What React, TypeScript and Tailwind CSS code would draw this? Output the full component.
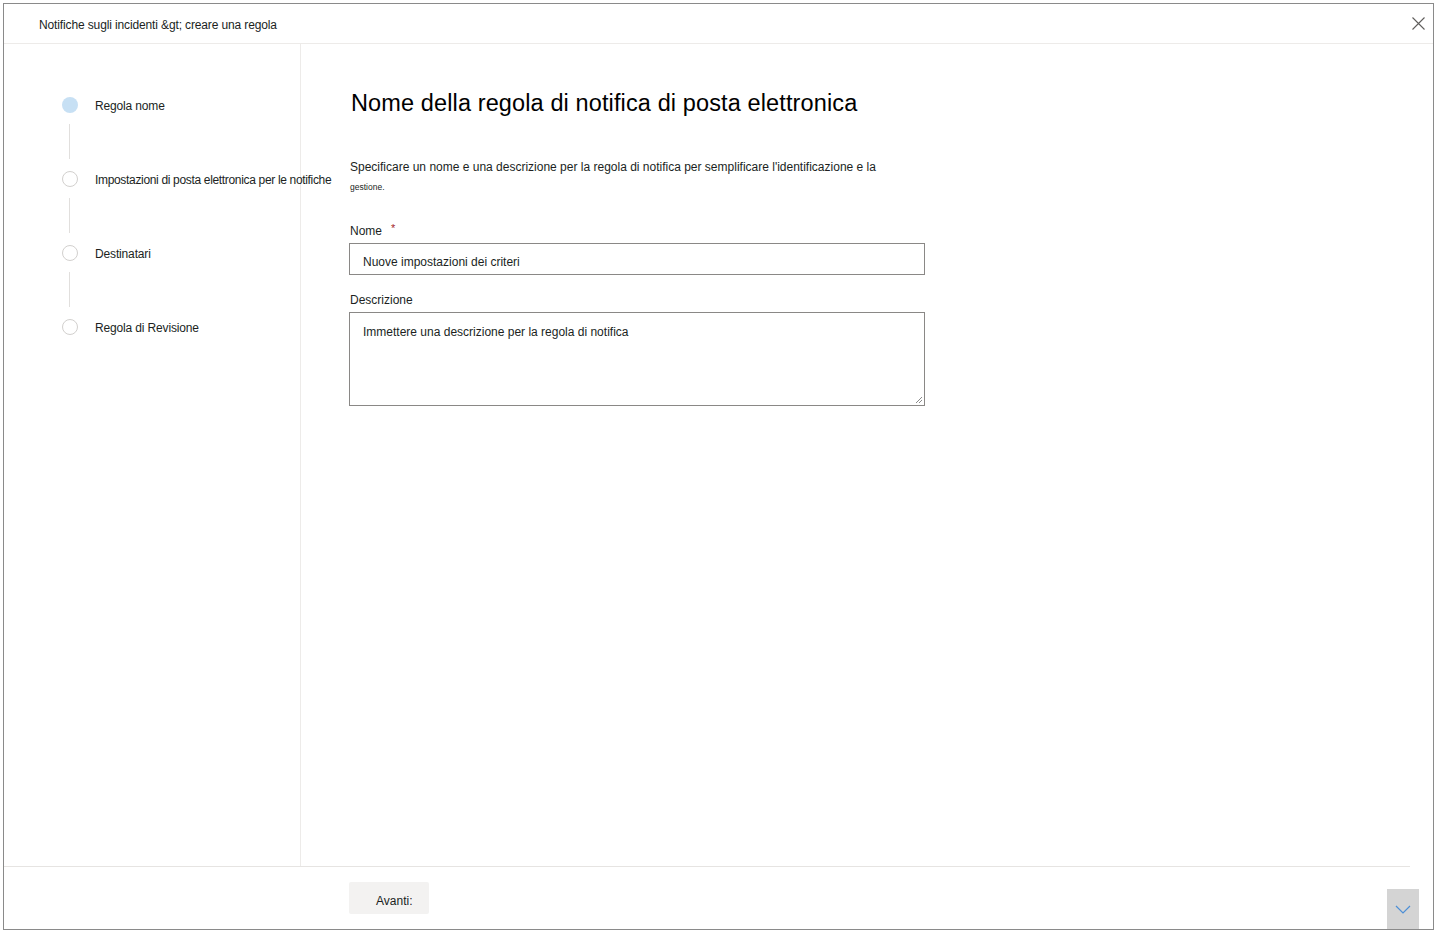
import React from "react";

const font = { fontFamily: '"Liberation Sans", Arial, sans-serif' };

function Step({ label, active, last, tight }: { label: string; active?: boolean; last?: boolean; tight?: boolean }) {
  return (
    <div className="flex flex-col">
      <div className="flex items-center h-[16px]">
        <div
          className={
            active
              ? "w-[16px] h-[16px] shrink-0 rounded-full bg-[#c7e0f4]"
              : "w-[16px] h-[16px] shrink-0 rounded-full border border-[#d2d0ce] bg-white"
          }
        />
        <span
          className={
            tight
              ? "ml-[17px] text-[12px] text-[#201f1e] tracking-[-0.33px] whitespace-nowrap pt-[1px]"
              : "ml-[17px] text-[12px] text-[#201f1e] tracking-[-0.15px] whitespace-nowrap pt-[2px]"
          }
        >
          {label}
        </span>
      </div>
      {!last && (
        <div className="flex pl-[7px] pt-[11px] pb-[12px]">
          <div className="w-[1px] h-[35px] bg-[#e1dfdd]" />
        </div>
      )}
    </div>
  );
}

export default function App() {
  return (
    <div className="w-[1443px] h-[933px] bg-white pt-[3px] pl-[3px]" style={font}>
      <div className="w-[1431px] h-[927px] border border-[#8a8a8a] flex flex-col">
        <div className="h-[40px] border-b border-[#edebe9] flex items-center justify-between pl-[35px] pr-[8px] shrink-0">
          <span className="text-[12px] text-[#201f1e] tracking-[-0.13px] pt-[3px]">
            Notifiche sugli incidenti &amp;gt; creare una regola
          </span>
          <svg width="13" height="13" viewBox="0 0 13 13" className="mb-[1px]">
            <path d="M0.5 0.5L12.5 12.5M12.5 0.5L0.5 12.5" stroke="#605e5c" strokeWidth="1.1" fill="none" />
          </svg>
        </div>
        <div className="flex flex-1 min-h-0">
          <div className="w-[297px] border-r border-[#edebe9] pt-[53px] pl-[58px] shrink-0 overflow-visible relative z-10">
            <Step label="Regola nome" active />
            <Step label="Impostazioni di posta elettronica per le notifiche" tight />
            <Step label="Destinatari" />
            <Step label="Regola di Revisione" last />
          </div>
          <div className="flex-1 pl-[48px] pt-[44px]">
            <h1 className="text-[23.5px] text-[#000] leading-[30px] tracking-[0.12px] ml-[2px]">
              Nome della regola di notifica di posta elettronica
            </h1>
            <p className="mt-[41px] text-[12px] text-[#201f1e] tracking-[0px] leading-[16px] ml-[1px]">
              Specificare un nome e una descrizione per la regola di notifica per semplificare l'identificazione e la
            </p>
            <p className="mt-[6px] text-[8.5px] text-[#201f1e] tracking-[0px] leading-[12px] ml-[1px]">gestione.</p>
            <div className="mt-[30px] flex items-start ml-[1px]">
              <span className="text-[12px] text-[#201f1e] tracking-[0px] leading-[16px]">Nome</span>
              <span className="ml-[9px] text-[11px] leading-[10px] text-[#a4262c]">*</span>
            </div>
            <div className="mt-[4px] w-[576px] h-[32px] border border-[#8a8886] flex items-center pl-[13px]">
              <span className="text-[12px] text-[#201f1e] tracking-[0px] pt-[5px]">Nuove impostazioni dei criteri</span>
            </div>
            <div className="mt-[17px] text-[12px] text-[#201f1e] tracking-[0px] leading-[16px] ml-[1px]">Descrizione</div>
            <div className="mt-[4px] w-[576px] h-[94px] border border-[#8a8886] pl-[13px] pt-[12px] relative">
              <div className="text-[12px] text-[#201f1e] tracking-[0px] leading-[14px]">
                Immettere una descrizione per la regola di notifica
              </div>
              <svg width="8" height="8" viewBox="0 0 8 8" className="absolute right-[1px] bottom-[1px]">
                <path d="M7 1L1 7M7 4L4 7" stroke="#8a8a8a" strokeWidth="1" fill="none" />
              </svg>
            </div>
          </div>
        </div>
        <div className="h-[63px] shrink-0 flex flex-col">
          <div className="w-[1406px] border-t border-[#e6e4e2]" />
          <div className="flex flex-1 items-start pt-[15px] pl-[345px] pr-[14px] justify-between">
            <div className="w-[80px] h-[32px] bg-[#f3f2f1] rounded-[2px] flex items-center pl-[27px]">
              <span className="text-[12px] text-[#201f1e] tracking-[0px] pt-[5px]">Avanti:</span>
            </div>
            <div className="w-[32px] h-[40px] bg-[#d4d4d4] flex items-center justify-center self-end">
              <svg width="16" height="10" viewBox="0 0 16 10">
                <path d="M1 2L8 9L15 2" stroke="#4c8fd6" strokeWidth="1.2" fill="none" />
              </svg>
            </div>
          </div>
        </div>
      </div>
    </div>
  );
}
